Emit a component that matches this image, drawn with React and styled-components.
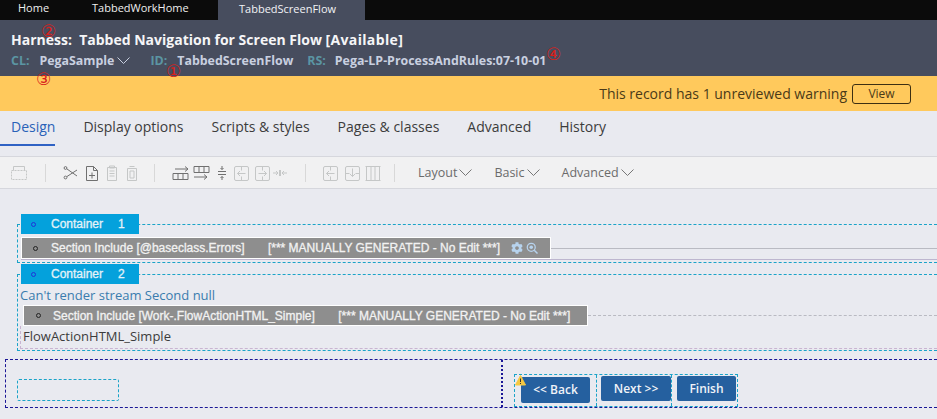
import React from 'react'
import styled, { createGlobalStyle } from 'styled-components'
import { FaCog } from 'react-icons/fa'

const GlobalStyle = createGlobalStyle`
  html, body { margin: 0; padding: 0; background: #e9eaf0; }
  body { width: 937px; height: 419px; overflow: hidden; font-family: "Open Sans", "Liberation Sans", sans-serif; }
`

const Page = styled.div`
  position: relative;
  width: 937px;
  height: 419px;
  overflow: hidden;
  background: #e9eaf0;
`

// Top tabs
const TopNav = styled.div`
  display: flex;
  height: 20px;
  background: #0b0b0b;
`
const TopTab = styled.div`
  width: ${props => props.w}px;
  padding-left: ${props => props.pl}px;
  box-sizing: border-box;
  font-size: 11px;
  line-height: ${props => (props.active ? 18 : 16)}px;
  height: 20px;
  color: ${props => (props.active ? '#f2f3f6' : '#eeeeee')};
  background: ${props => (props.active ? '#474d5e' : 'transparent')};
`

// Harness header
const Header = styled.div`
  height: 56px;
  background: #474d5e;
  box-sizing: border-box;
  padding: 10px 0 0 11px;
`
const Title = styled.div`
  font-size: 14px;
  font-weight: 700;
  line-height: 19px;
  color: #f5f5f7;
  white-space: pre;
`
const Status = styled.span`
  letter-spacing: 0.35px;
`
const MetaRow = styled.div`
  display: flex;
  align-items: center;
  margin-top: 2px;
  height: 19px;
  font-size: 12.4px;
  font-weight: 700;
`
const MetaLabel = styled.span`
  color: #5b95a3;
  margin-left: ${props => props.ml || 0}px;
  margin-right: ${props => props.mr || 6}px;
`
const MetaValue = styled.span`
  color: #c9d0e0;
`
const Chevron = styled.svg`
  display: block;
  width: ${props => props.w || 12}px;
  height: 7px;
  margin-left: ${props => props.ml || 4}px;
  fill: none;
  stroke: ${props => props.color || '#777'};
  stroke-width: 1;
`
const Mark = styled.span`
  position: absolute;
  left: ${props => props.x}px;
  top: ${props => props.y}px;
  font-family: "DejaVu Sans", sans-serif;
  font-size: 17px;
  line-height: 18px;
  color: #d8201c;
`

// Warning banner
const Banner = styled.div`
  display: flex;
  align-items: center;
  justify-content: flex-end;
  height: 35px;
  padding-right: 26px;
  background: #ffc95c;
  color: #4a3a18;
  font-size: 14px;
`
const ViewButton = styled.div`
  width: 57px;
  height: 18px;
  margin-left: 5px;
  border: 1px solid #3d2f12;
  border-radius: 3px;
  font-size: 12px;
  line-height: 18px;
  text-align: center;
`

// Rule form tabs
const TabBar = styled.div`
  display: flex;
  height: 45px;
  box-sizing: border-box;
  padding: 3px 0 0 11px;
  gap: 28px;
`
const FormTab = styled.div`
  height: ${props => (props.active ? 30 : 29)}px;
  font-size: 14px;
  line-height: 26px;
  color: ${props => (props.active ? '#2a62b8' : '#3c3c3c')};
  border-bottom: ${props => (props.active ? '2px solid #2f62c4' : 'none')};
  margin: ${props => (props.active ? '0 0 0 -11px' : '0')};
  padding: ${props => (props.active ? '0 0 0 11px' : '0')};
`

// Toolbar
const Toolbar = styled.div`
  display: flex;
  align-items: center;
  height: 33px;
  box-sizing: border-box;
  background: #f1f1f2;
  border-top: 1px solid #d6d7dd;
  border-bottom: 1px solid #d6d7dd;
  padding-left: 10px;
`
const Sep = styled.div`
  width: 1px;
  height: 18px;
  flex: none;
  background: #d8d8d8;
  margin: 0 ${props => props.mr}px 0 ${props => props.ml}px;
`
const ToolIcon = styled.svg`
  display: block;
  flex: none;
  width: ${props => props.w || 18}px;
  height: 18px;
  margin-right: ${props => props.gap || 0}px;
  fill: none;
  stroke: ${props => (props.off ? '#c5c7c7' : '#707070')};
  stroke-width: 1;
`
const MenuItem = styled.div`
  display: flex;
  align-items: center;
  margin-right: 22px;
  font-size: 12.5px;
  color: #6b6b6b;
`

// Design canvas
const Canvas = styled.div`
  padding-top: 35px;
`
const Container = styled.div`
  margin: ${props => props.mt || 0}px 0 0 17px;
  border-top: 1px dashed #1aa3c8;
  border-left: 1px dashed #1aa3c8;
  border-bottom: 1px dashed #1aa3c8;
  padding-left: 3px;
  height: ${props => props.h}px;
  box-sizing: border-box;
`
const ContainerHead = styled.div`
  display: flex;
  align-items: center;
  width: 118px;
  height: 20px;
  margin-top: -11px;
  background: #04a1dc;
  color: #e4f2f8;
  font-family: "Liberation Sans", sans-serif;
  font-size: 12px;
  -webkit-text-stroke: 0.3px #e4f2f8;
`
const Dot = styled.span`
  width: 3px;
  height: 3px;
  margin-left: ${props => props.ml}px;
  margin-right: ${props => props.mr}px;
  border-radius: 50%;
  border: 1px solid ${props => props.color};
  flex: none;
`
const HeadNum = styled.span`
  margin-left: 15px;
`
const SectionRow = styled.div`
  display: flex;
  align-items: center;
  margin-top: ${props => props.mt || 0}px;
  margin-left: ${props => props.ml || 0}px;
  border-bottom: ${props => (props.underline ? '1px solid #bdb6cf' : 'none')};
`
const SectionBar = styled.div`
  display: flex;
  align-items: center;
  width: ${props => props.w}px;
  height: ${props => props.h || 22}px;
  box-sizing: border-box;
  flex: none;
  background: #8e8e8e;
  border: 1px solid #fff;
  color: #f2f2f2;
  font-family: "Liberation Sans", sans-serif;
  font-size: 12px;
  -webkit-text-stroke: 0.3px #f2f2f2;
  white-space: pre;
`
const SectionTail = styled.div`
  flex: 1;
  border-top: 1px ${props => props.kind || 'solid'} #b9bac2;
`
const StreamText = styled.div`
  margin: 2px 0 0 -1px;
  font-size: 13px;
  line-height: 18px;
  color: #3a7cae;
`
const FlowAction = styled.div`
  margin-left: -1px;
  height: 23px;
  box-sizing: border-box;
  border-bottom: 1px dashed #c9b4d2;
  border-left: 1px dashed #c9b4d2;
  padding-left: 2px;
  font-size: 13px;
  line-height: 20px;
  color: #3c3c3c;
`

// Footer layout
const Footer = styled.div`
  display: flex;
  margin: 8px 0 0 5px;
  height: 49px;
  box-sizing: border-box;
  border-top: 1px dashed #1a1696;
  border-bottom: 1px dashed #1a1696;
  border-left: 1px dashed #1a1696;
`
const FooterLeft = styled.div`
  width: 497px;
  padding: 19px 0 0 11px;
  box-sizing: border-box;
  border-right: 2px dotted #1a1696;
`
const EmptyCell = styled.div`
  width: 102px;
  height: 22px;
  box-sizing: border-box;
  border: 1px dashed #1aa3c8;
  border-radius: 2px;
`
const FooterRight = styled.div`
  padding: 14px 0 0 11px;
`
const ButtonBox = styled.div`
  position: relative;
  display: flex;
  width: 224px;
  height: 33px;
  box-sizing: border-box;
  border: 1px dashed #1aa3c8;
`
const ButtonCell = styled.div`
  width: ${props => props.w}px;
  box-sizing: border-box;
  padding: ${props => props.pad};
  border-right: ${props => (props.last ? 'none' : '1px dashed #1aa3c8')};
`
const FlowButton = styled.div`
  height: ${props => props.h || 25}px;
  background: #25609f;
  border-radius: 2px;
  color: #f0f3f8;
  font-size: 12px;
  font-weight: 600;
  line-height: ${props => props.h || 25}px;
  text-align: center;
`
const WarnBadge = styled.svg`
  position: absolute;
  left: 0;
  top: 0;
  width: 11px;
  height: 11px;
`
const Gear = styled(FaCog)`
  flex: none;
  width: 12px;
  height: 12px;
  margin-left: 11px;
  color: #b7d3ee;
`
const Lens = styled.svg`
  display: block;
  flex: none;
  width: 12px;
  height: 12px;
  margin-left: 3px;
`

const Scissors = () => (
  <ToolIcon viewBox="0 0 18 18" gap={3}>
    <circle cx="3.5" cy="4" r="1.4" />
    <circle cx="3.5" cy="13.5" r="1.4" />
    <path d="M5 5l10 7M5 12.5L15 6" />
  </ToolIcon>
)
const AddDoc = () => (
  <ToolIcon viewBox="0 0 18 18" gap={2}>
    <path d="M3.5 2.500h7l4 4v10h-11zM10.500 2.500v4h4M9 8.500v6M6 11.500h6" />
  </ToolIcon>
)
const Clipboard = () => (
  <ToolIcon off viewBox="0 0 18 18" gap={2}>
    <path d="M4.500 3.500h9v13h-9zM6.500 2h5v2h-5zM6.500 7h5M6.500 9.500h5M6.500 12h5" />
  </ToolIcon>
)
const Trash = () => (
  <ToolIcon off viewBox="0 0 18 18">
    <path d="M4.500 4.500h9v12h-9zM6.500 2.500h5M7 7h4v7H7z" />
  </ToolIcon>
)
const Dotted = () => (
  <ToolIcon off viewBox="0 0 18 18">
    <path strokeDasharray="2 1" d="M1.500 6.500h15v9h-15z" />
    <path d="M3.500 6.500v-4h11v4" />
  </ToolIcon>
)
const RowAbove = () => (
  <ToolIcon w={20} viewBox="0 0 20 18">
    <path d="M2 9.500h15v6H2zM7 9.500v6M12 9.500v6M4 5h13M14 2.500L17 5l-3 2.500" />
  </ToolIcon>
)
const RowBelow = () => (
  <ToolIcon w={20} viewBox="0 0 20 18" gap={4}>
    <path d="M3 2.500h15v6H3zM8 2.500v6M13 2.500v6M3 13h13M13 10.500l3 2.500-3 2.500" />
  </ToolIcon>
)
const Spacing = () => (
  <ToolIcon w={14} viewBox="0 0 14 18" gap={4}>
    <path d="M3 7.500h8M3 10.500h8M7 2v3.500M5.500 4L7 5.500 8.500 4M7 16v-3.500M5.500 14L7 12.500 8.500 14" />
  </ToolIcon>
)
const BoxArrow = ({ dir, gap }) => (
  <ToolIcon off viewBox="0 0 18 18" gap={gap}>
    <rect x="1.500" y="2.500" width="14" height="14" rx="1.500" />
    {dir === 'left' && <path d="M8.500 2.500v4M8.500 12.500v4M12.500 9.500h-8M7 7L4.500 9.500 7 12" />}
    {dir === 'right' && <path d="M8.500 2.500v4M8.500 12.500v4M4.500 9.500h8M10 7l2.500 2.500L10 12" />}
    {dir === 'down' && <path d="M1.500 9.500h4M11.500 9.500h4M8.500 4.500v8M6 10l2.500 2.500L11 10" />}
  </ToolIcon>
)
const Merge = () => (
  <ToolIcon off w={16} viewBox="0 0 16 18">
    <path d="M1 9h5M4 7l2 2-2 2M15 9h-5M12 7l-2 2 2 2M7.500 6v6M8.500 6v6" />
  </ToolIcon>
)
const Columns = () => (
  <ToolIcon off viewBox="0 0 18 18">
    <path d="M1.500 2.500h15M1.500 16.500h15M2.500 2.500v14M7 2.500v14M11 2.500v14M15.500 2.500v14" />
  </ToolIcon>
)
const Down = ({ w, ml, color }) => (
  <Chevron viewBox={`0 0 ${w} 7`} w={w} ml={ml} color={color}>
    <path d={`M0.500 0.500L${w / 2} 6.500L${w - 0.5} 0.500`} />
  </Chevron>
)

const tabs = ['Design', 'Display options', 'Scripts & styles', 'Pages & classes', 'Advanced', 'History']

export default function App() {
  return (
    <Page>
      <GlobalStyle />
      <TopNav>
        <TopTab w={74} pl={18}>Home</TopTab>
        <TopTab w={144} pl={18}>TabbedWorkHome</TopTab>
        <TopTab w={147} pl={21} active>TabbedScreenFlow</TopTab>
      </TopNav>
      <Header>
        <Title>Harness:  Tabbed Navigation for Screen Flow <Status>[Available]</Status></Title>
        <MetaRow>
          <MetaLabel mr={10}>CL:</MetaLabel>
          <MetaValue>PegaSample</MetaValue>
          <Down w={13} ml={3} color="#c9d0e0" />
          <MetaLabel ml={20} mr={10}>ID:</MetaLabel>
          <MetaValue>TabbedScreenFlow</MetaValue>
          <MetaLabel ml={14} mr={9}>RS:</MetaLabel>
          <MetaValue>Pega-LP-ProcessAndRules:07-10-01</MetaValue>
        </MetaRow>
      </Header>
      <Mark x={41} y={22}>②</Mark>
      <Mark x={36} y={70}>③</Mark>
      <Mark x={166} y={62}>①</Mark>
      <Mark x={546} y={45}>④</Mark>
      <Banner>
        This record has 1 unreviewed warning
        <ViewButton>View</ViewButton>
      </Banner>
      <TabBar>
        {tabs.map((t, i) => (
          <FormTab key={t} active={i === 0}>{t}</FormTab>
        ))}
      </TabBar>
      <Toolbar>
        <Dotted />
        <Sep ml={17} mr={16} />
        <Scissors />
        <AddDoc />
        <Clipboard />
        <Trash />
        <Sep ml={13} mr={16} />
        <RowAbove />
        <RowBelow />
        <Spacing />
        <BoxArrow dir="left" gap={3} />
        <BoxArrow dir="right" />
        <Merge />
        <Sep ml={17} mr={16} />
        <BoxArrow dir="left" gap={4} />
        <BoxArrow dir="down" gap={2} />
        <Columns />
        <Sep ml={12} mr={23} />
        <MenuItem>Layout<Down w={13} ml={2} /></MenuItem>
        <MenuItem>Basic<Down w={13} ml={2} /></MenuItem>
        <MenuItem>Advanced<Down w={13} ml={2} /></MenuItem>
      </Toolbar>
      <Canvas>
        <Container h={39}>
          <ContainerHead>
            <Dot color="#2033d8" ml={10} mr={15} />Container<HeadNum>1</HeadNum>
          </ContainerHead>
          <SectionRow mt={3} underline>
            <SectionBar w={530}>
              <Dot color="#222" ml={11} mr={13} />
              Section Include [@baseclass.Errors]       [*** MANUALLY GENERATED - No Edit ***]
              <Gear />
              <Lens viewBox="0 0 24 24">
                <circle cx="10.500" cy="10.500" r="8" fill="none" stroke="#b7d3ee" strokeWidth="2.500" />
                <circle cx="10.500" cy="10.500" r="3.500" fill="#b7d3ee" />
                <path d="M16.500 16.500L23 23" stroke="#b7d3ee" strokeWidth="3" />
              </Lens>
            </SectionBar>
            <SectionTail />
          </SectionRow>
        </Container>
        <Container h={77} mt={11}>
          <ContainerHead>
            <Dot color="#2033d8" ml={10} mr={15} />Container<HeadNum>2</HeadNum>
          </ContainerHead>
          <StreamText>Can't render stream Second null</StreamText>
          <SectionRow ml={2} mt={1}>
            <SectionBar w={565} h={21}>
              <Dot color="#222" ml={12} mr={12} />
              Section Include [Work-.FlowActionHTML_Simple]       [*** MANUALLY GENERATED - No Edit ***]
            </SectionBar>
            <SectionTail kind="dashed" />
          </SectionRow>
          <FlowAction>FlowActionHTML_Simple</FlowAction>
        </Container>
        <Footer>
          <FooterLeft>
            <EmptyCell />
          </FooterLeft>
          <FooterRight>
            <ButtonBox>
              <WarnBadge viewBox="0 0 11 11">
                <path d="M5.500 0.500L10.500 10H0.500z" fill="#f5c842" stroke="#f5c842" strokeLinejoin="round" />
                <path d="M5.500 3.500v3.500M5.500 8v1" stroke="#333" />
              </WarnBadge>
              <ButtonCell w={82} pad="2px 6px 0 6px"><FlowButton h={26}>&lt;&lt; Back</FlowButton></ButtonCell>
              <ButtonCell w={75} pad="1px 0 0 4px"><FlowButton>Next &gt;&gt;</FlowButton></ButtonCell>
              <ButtonCell w={64} pad="1px 0 0 5px" last><FlowButton>Finish</FlowButton></ButtonCell>
            </ButtonBox>
          </FooterRight>
        </Footer>
      </Canvas>
    </Page>
  )
}
